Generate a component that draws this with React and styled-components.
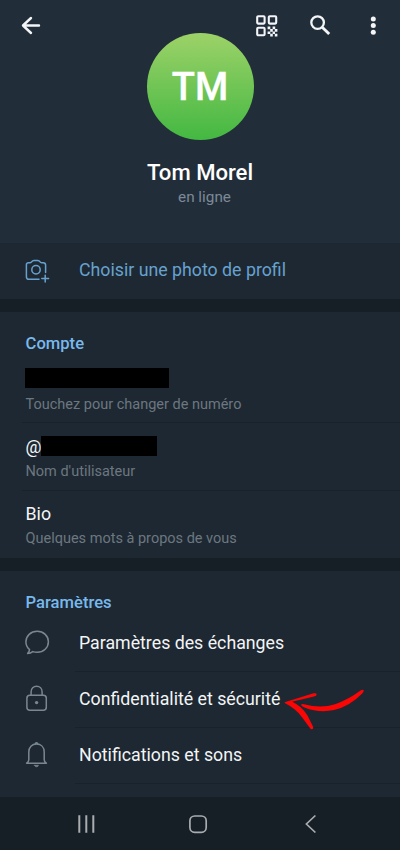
import styled, { createGlobalStyle } from "styled-components";

const GlobalStyle = createGlobalStyle`
  * {
    box-sizing: border-box;
  }

  body {
    margin: 0;
    background: #161e26;
    font-family: Roboto, "Liberation Sans", sans-serif;
  }

  h1, h2, p {
    margin: 0;
  }

  svg {
    display: block;
    flex: none;
  }
`;

const Screen = styled.div`
  width: 400px;
  height: 850px;
  display: flex;
  flex-direction: column;
  overflow: hidden;
  background: #161e26;
  color: #f3f5f6;
`;

const Header = styled.header`
  display: grid;
  grid-template-columns: 1fr 108px 1fr;
  height: 243px;
  flex: none;
  background: #222d3a;
`;

const Back = styled.div`
  padding: 16px 0 0 21px;
`;

const Profile = styled.div`
  display: flex;
  flex-direction: column;
  align-items: center;
  padding-top: 33px;
  white-space: nowrap;
`;

const Avatar = styled.div`
  width: 107px;
  height: 107px;
  border-radius: 50%;
  display: flex;
  align-items: center;
  justify-content: center;
  background: linear-gradient(#9dd268, #43b842);
  color: #fff;
  font-size: 38px;
  font-weight: 500;
  -webkit-text-stroke: 0.4px #fff;
`;

const Name = styled.h1`
  margin-top: 18px;
  font-size: 22.1px;
  font-weight: 500;
  line-height: 28px;
  color: #fff;
`;

const Status = styled.p`
  padding-left: 9px;
  font-size: 15.3px;
  line-height: 22px;
  color: #7c8997;
`;

const Actions = styled.div`
  display: flex;
  justify-content: space-between;
  align-items: flex-start;
  padding: 15px 24px 0 2px;
`;

const Section = styled.section`
  flex: none;
  height: ${(p) => p.$height}px;
  margin-bottom: ${(p) => p.$gap || 0}px;
  background: #1e2832;
`;

const SectionTitle = styled.h2`
  padding: 20px 0 0 25.6px;
  height: ${(p) => p.$height}px;
  font-size: 16.6px;
  font-weight: 500;
  line-height: 24px;
  color: #78b9ed;
`;

const Field = styled.div`
  display: flex;
  flex-direction: column;
  height: ${(p) => p.$height}px;
  margin-left: 22px;
  padding-left: 3.5px;
  border-bottom: ${(p) => (p.$last ? "none" : "1px solid #19222b")};
`;

const Value = styled.div`
  display: flex;
  flex: none;
  align-items: center;
  height: 22px;
  margin-top: ${(p) => p.$top}px;
  font-size: 17.8px;
`;

const Redacted = styled.span`
  width: ${(p) => p.$width}px;
  height: 20px;
  margin-left: -0.5px;
  background: #000;
`;

const Hint = styled.p`
  margin-top: ${(p) => p.$top}px;
  font-size: 14.5px;
  line-height: 20px;
  color: #6c7780;
  white-space: nowrap;
`;

const Row = styled.div`
  display: flex;
  height: ${(p) => (p.$accent ? 55 : 56)}px;
  color: ${(p) => (p.$accent ? "#67a2cf" : "#f3f5f6")};
`;

const RowIcon = styled.div`
  width: 75px;
  display: flex;
  align-items: center;
  padding: 0 0 2px 22px;
  color: ${(p) => (p.$accent ? "#67a2cf" : "#7a8792")};
`;

const RowLabel = styled.div`
  position: relative;
  flex: 1;
  display: flex;
  align-items: center;
  padding: 0 0 ${(p) => (p.$plain ? 1 : 2)}px 4px;
  border-bottom: ${(p) => (p.$plain ? "none" : "1px solid #19222b")};
  font-size: 17.75px;
  white-space: nowrap;
`;

const Pointer = styled.svg`
  position: absolute;
  left: 207px;
  top: 13px;
`;

const NavBar = styled.nav`
  flex: 1;
  display: flex;
  justify-content: space-between;
  padding: 15px 81px 0 75px;
  background: #161e26;
`;

const stroke = {
  fill: "none",
  stroke: "currentColor",
  strokeLinecap: "round",
  strokeLinejoin: "round",
};

const BackIcon = () => (
  <svg width="20" height="19" viewBox="0 0 20 19" {...stroke} strokeWidth="2.4">
    <path d="M18 9.5H2M10 2L2 9.5L10 17" />
  </svg>
);

const QrIcon = () => (
  <svg width="22" height="22" viewBox="0 0 22 22" {...stroke} strokeWidth="2.1">
    <rect x="1.2" y="1.2" width="7.4" height="7.4" rx="1" />
    <rect x="12.8" y="1.2" width="7.4" height="7.4" rx="1" />
    <rect x="1.2" y="12.8" width="7.4" height="7.4" rx="1" />
    <path
      fill="currentColor"
      stroke="none"
      d="M11.6 11.6h2.7v2.6h-2.7zM16.6 11.6h2.6v2.6h-2.6zM14.2 14.1h2.6v2.6h-2.6zM18.8 14.1h2.6v2.6h-2.6zM11.6 16.5h2.7v2.6h-2.7zM16.6 16.5h2.4v2.4h-2.4zM14.2 18.8h2.6v2.6h-2.6zM18.8 18.8h2.6v2.6h-2.6z"
    />
  </svg>
);

const SearchIcon = () => (
  <svg width="29" height="21" viewBox="0 0 29 21" {...stroke} strokeWidth="2.3">
    <circle cx="7.6" cy="7.6" r="6.3" />
    <path d="M12.2 12.2L19.2 19" strokeWidth="2.9" strokeLinecap="butt" />
  </svg>
);

const MoreIcon = () => (
  <svg width="6" height="22" viewBox="0 0 6 22" fill="currentColor">
    <circle cx="3.3" cy="3.9" r="2.5" />
    <circle cx="3.3" cy="10.5" r="2.5" />
    <circle cx="3.3" cy="17.2" r="2.5" />
  </svg>
);

const CameraIcon = () => (
  <svg width="32" height="32" viewBox="0 0 32 32" {...stroke} strokeWidth="1.5">
    <path d="M17 25.3H7Q4.4 25.3 4.4 22.7V10.8Q4.4 8.7 6.6 8.7H8.1Q9.2 8.7 9.8 7.7Q10.5 6.4 12 6.4H15.7Q17.2 6.4 17.9 7.7Q18.5 8.7 19.6 8.7H21.2Q23.6 8.7 23.6 11V18.5" />
    <circle cx="14" cy="15.8" r="4.2" />
    <path d="M23.2 21.2V28M19.8 24.6H26.6" />
  </svg>
);

const ChatIcon = () => (
  <svg width="30" height="30" viewBox="0 0 30 30" {...stroke} strokeWidth="1.5">
    <path d="M15.2 3.3C8.8 3.3 3.9 7.9 3.9 13.8C3.9 17.1 5.3 19.8 7.6 21.6C7.6 23 6.9 24.1 5.6 25.5C7.7 25.5 9.4 24.8 10.8 23.6C12.2 24.1 13.6 24.3 15.2 24.3C21.6 24.3 26.4 19.7 26.4 13.8C26.4 7.9 21.6 3.3 15.2 3.3Z" />
  </svg>
);

const LockIcon = () => (
  <svg width="30" height="30" viewBox="0 0 30 30" {...stroke} strokeWidth="1.5">
    <rect x="4.9" y="11.2" width="19.4" height="15" rx="3" />
    <path d="M9.1 11V7.8C9.1 4.5 11.5 2.3 14.6 2.3S20.1 4.5 20.1 7.8V11" />
    <circle cx="14.6" cy="18.6" r="1.7" fill="currentColor" stroke="none" />
  </svg>
);

const BellIcon = () => (
  <svg width="30" height="30" viewBox="0 0 30 30" {...stroke} strokeWidth="1.5">
    <path d="M4.6 23.2C6.2 22.4 6.8 21.3 6.8 19.8V12.1C6.8 7.2 10 4.1 14.5 4.1S22.2 7.2 22.2 12.1V19.8C22.2 21.3 22.8 22.4 24.4 23.2Z" />
    <path d="M13.4 3.4Q14.5 2.4 15.6 3.4" />
    <path d="M12.5 25.3H16.5Q16 26.8 14.5 26.8T12.5 25.3Z" fill="currentColor" strokeWidth="0.6" />
  </svg>
);

const settings = [
  { label: "Paramètres des échanges", Icon: ChatIcon },
  { label: "Confidentialité et sécurité", Icon: LockIcon, pointed: true },
  { label: "Notifications et sons", Icon: BellIcon },
];

const App = () => {
  return (
    <>
      <GlobalStyle />
      <Screen>
        <Header>
          <Back>
            <BackIcon />
          </Back>
          <Profile>
            <Avatar>TM</Avatar>
            <Name>Tom Morel</Name>
            <Status>en ligne</Status>
          </Profile>
          <Actions>
            <QrIcon />
            <SearchIcon />
            <MoreIcon />
          </Actions>
        </Header>

        <Section $height={56} $gap={13}>
          <Row $accent>
            <RowIcon $accent>
              <CameraIcon />
            </RowIcon>
            <RowLabel $plain>Choisir une photo de profil</RowLabel>
          </Row>
        </Section>

        <Section $height={246} $gap={13}>
          <SectionTitle $height={48}>Compte</SectionTitle>
          <Field $height={63}>
            <Value $top={7}>
              <Redacted $width={144} />
            </Value>
            <Hint $top={6}>Touchez pour changer de numéro</Hint>
          </Field>
          <Field $height={68}>
            <Value $top={12}>
              @<Redacted $width={116} />
            </Value>
            <Hint $top={5}>Nom d'utilisateur</Hint>
          </Field>
          <Field $height={67} $last>
            <Value $top={11}>Bio</Value>
            <Hint $top={5}>Quelques mots à propos de vous</Hint>
          </Field>
        </Section>

        <Section $height={226}>
          <SectionTitle $height={45}>Paramètres</SectionTitle>
          {settings.map(({ label, Icon, pointed }) => (
            <Row key={label}>
              <RowIcon>
                <Icon />
              </RowIcon>
              <RowLabel>
                {label}
                {pointed && (
                  <Pointer width="84" height="46" viewBox="0 0 84 46" fill="#fb0505">
                    <path d="M2.6 17.2L31.5 8.3Q34.6 7.7 34.7 9.3Q34.7 10.9 32 11.6L10.2 16.8Q19.5 21 25.5 30.5L31.2 42Q31.5 44.7 29.4 44.2Q28.2 43.7 27.2 42L20 32.2Q13.5 23.5 4 18.8Q2.5 18 2.6 17.2Z" />
                    <path d="M19.2 19.5Q19.6 18.6 22 19.2Q39 23.7 53 19.2Q66.5 14.5 78.5 5.5Q81 4 81.7 5.2Q82 6.4 80.5 8.2Q67.5 21.5 52 25Q37 28.2 22.5 22.4Q19 21 19.2 19.5Z" />
                  </Pointer>
                )}
              </RowLabel>
            </Row>
          ))}
        </Section>

        <NavBar>
          <svg width="24" height="24" viewBox="0 0 24 24" fill="none" stroke="#a9adb0" strokeWidth="2">
            <path d="M4.3 3.2V20.8M11.3 3.2V20.8M18.3 3.2V20.8" />
          </svg>
          <svg width="30" height="24" viewBox="0 0 30 24" fill="none" stroke="#a9adb0" strokeWidth="1.7">
            <rect x="4.9" y="4" width="16.3" height="16.3" rx="4.8" />
          </svg>
          <svg width="18" height="24" viewBox="0 0 18 24" fill="none" stroke="#a9adb0" strokeWidth="1.7">
            <path d="M14.4 3.5L5.4 12L14.4 20.5" />
          </svg>
        </NavBar>
      </Screen>
    </>
  );
};

export default App;
